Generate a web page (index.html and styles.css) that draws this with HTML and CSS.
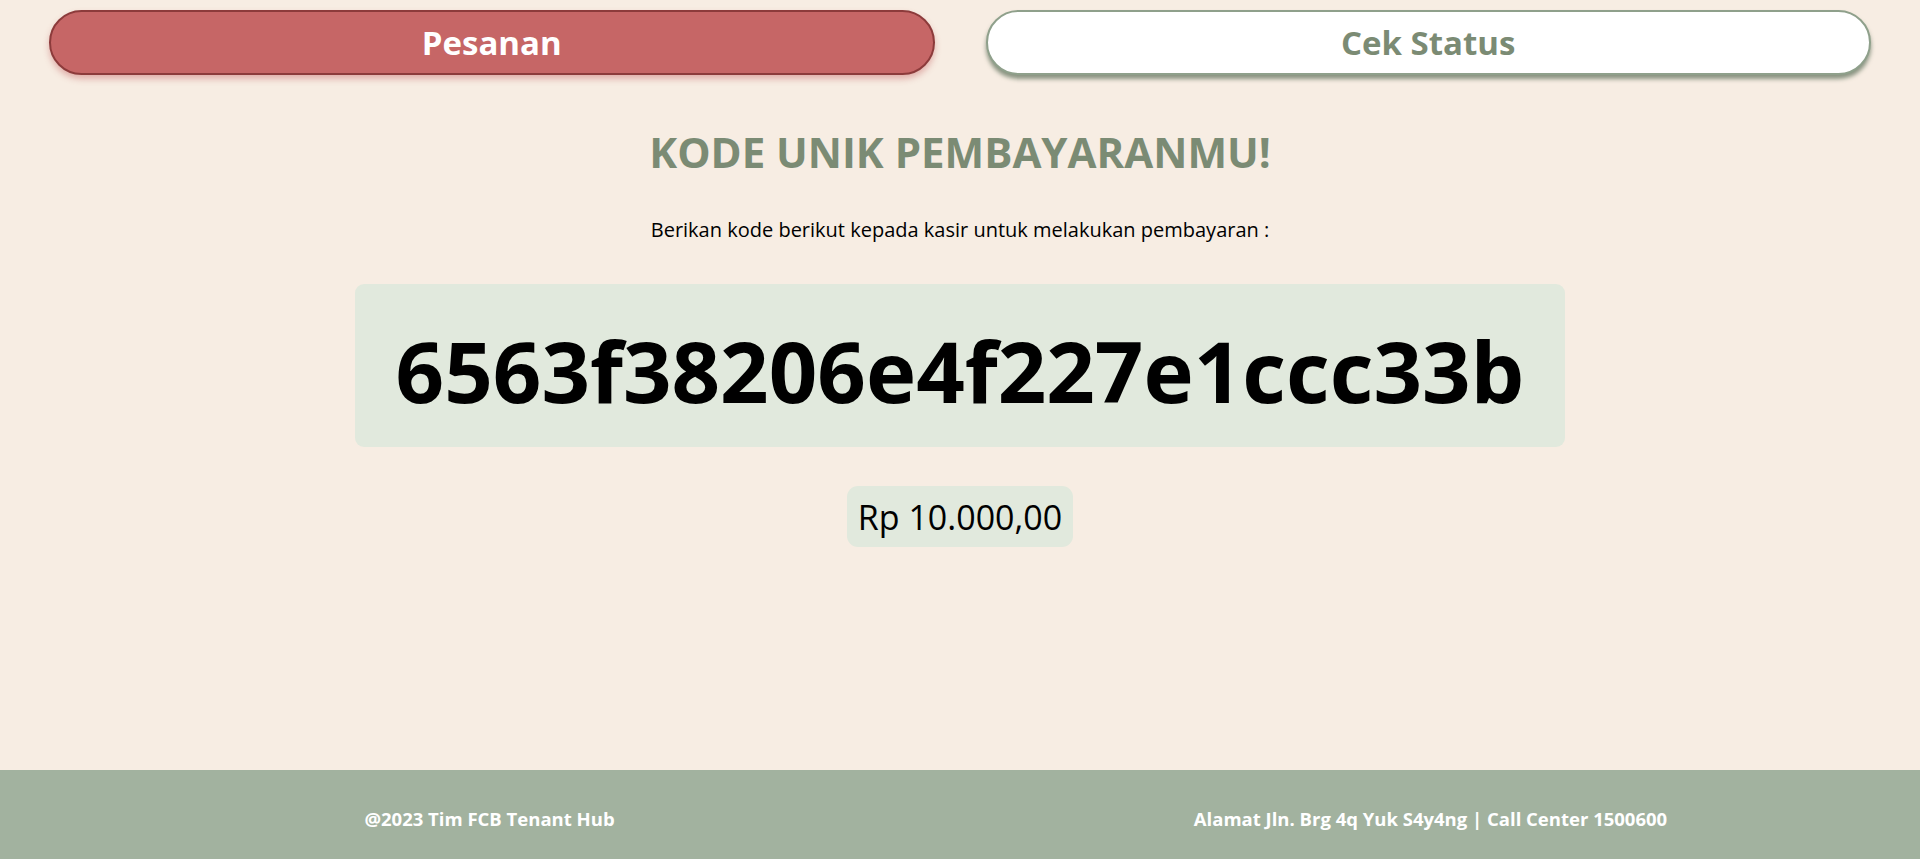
FILE: index.html
```html
<!DOCTYPE html>
<html lang="id">
<head>
<meta charset="utf-8">
<title>Kode Pembayaran</title>
<link rel="stylesheet" href="styles.css">
</head>
<body>
<div class="page">
  <nav class="tabs">
    <a class="tab tab-active" href="#">Pesanan</a>
    <a class="tab tab-plain" href="#">Cek Status</a>
  </nav>
  <main class="content">
    <h1 class="title">KODE UNIK PEMBAYARANMU!</h1>
    <p class="hint">Berikan kode berikut kepada kasir untuk melakukan pembayaran :</p>
    <div class="code-box"><span class="code">6563f38206e4f227e1ccc33b</span></div>
    <div class="amount">Rp 10.000,00</div>
  </main>
</div>
<footer class="footer">
  <div class="footer-col">@2023 Tim FCB Tenant Hub</div>
  <div class="footer-col">Alamat Jln. Brg 4q Yuk S4y4ng | Call Center 1500600</div>
</footer>
</body>
</html>
```

FILE: styles.css
```css
* { box-sizing: border-box; }
html, body { margin: 0; padding: 0; }
body {
  background: #f7ede3;
  font-family: "Open Sans", "Noto Sans", sans-serif;
  color: #000;
  height: 859px;
  display: flex;
  flex-direction: column;
}
.page { height: 770px; }
.tabs {
  display: flex;
  gap: 51px;
  padding: 10px 49px 0;
}
.tab {
  flex: 1;
  height: 65px;
  border-radius: 33px;
  display: flex;
  align-items: center;
  justify-content: center;
  font-weight: 700;
  font-size: 33px;
  text-decoration: none;
}
.tab-active {
  background: #c66666;
  color: #fff;
  border: 2px solid #8c3b3b;
  box-shadow: 0 4px 6px rgba(198, 102, 102, 0.45);
}
.tab-plain {
  background: #fff;
  color: #7b8b74;
  border: 2px solid #8fa08b;
  box-shadow: 0 4px 4px rgba(110, 125, 105, 0.8);
}
.content {
  display: flex;
  flex-direction: column;
  align-items: center;
}
.title {
  margin: 49px 0 0;
  font-size: 42px;
  font-weight: 700;
  color: #7b8b74;
  line-height: 56px;
}
.hint {
  margin: 36px 0 0;
  font-size: 20px;
  line-height: 28px;
}
.code-box {
  margin-top: 40px;
  width: 1210px;
  height: 163px;
  background: #e1e9dd;
  border-radius: 9px;
  display: flex;
  align-items: center;
  justify-content: center;
}
.code {
  font-size: 85px;
  font-weight: 700;
  line-height: 1;
  padding-top: 10px;
}
.amount {
  margin-top: 39px;
  height: 61px;
  padding: 0 11px;
  background: #e1e9dd;
  border-radius: 11px;
  font-size: 34px;
  display: flex;
  align-items: center;
}
.footer {
  height: 89px;
  background: #a2b29f;
  display: flex;
  align-items: center;
  padding: 7px 19px 0;
  color: #fff;
  font-weight: 700;
  font-size: 18.5px;
}
.footer-col { flex: 1; text-align: center; }
```
